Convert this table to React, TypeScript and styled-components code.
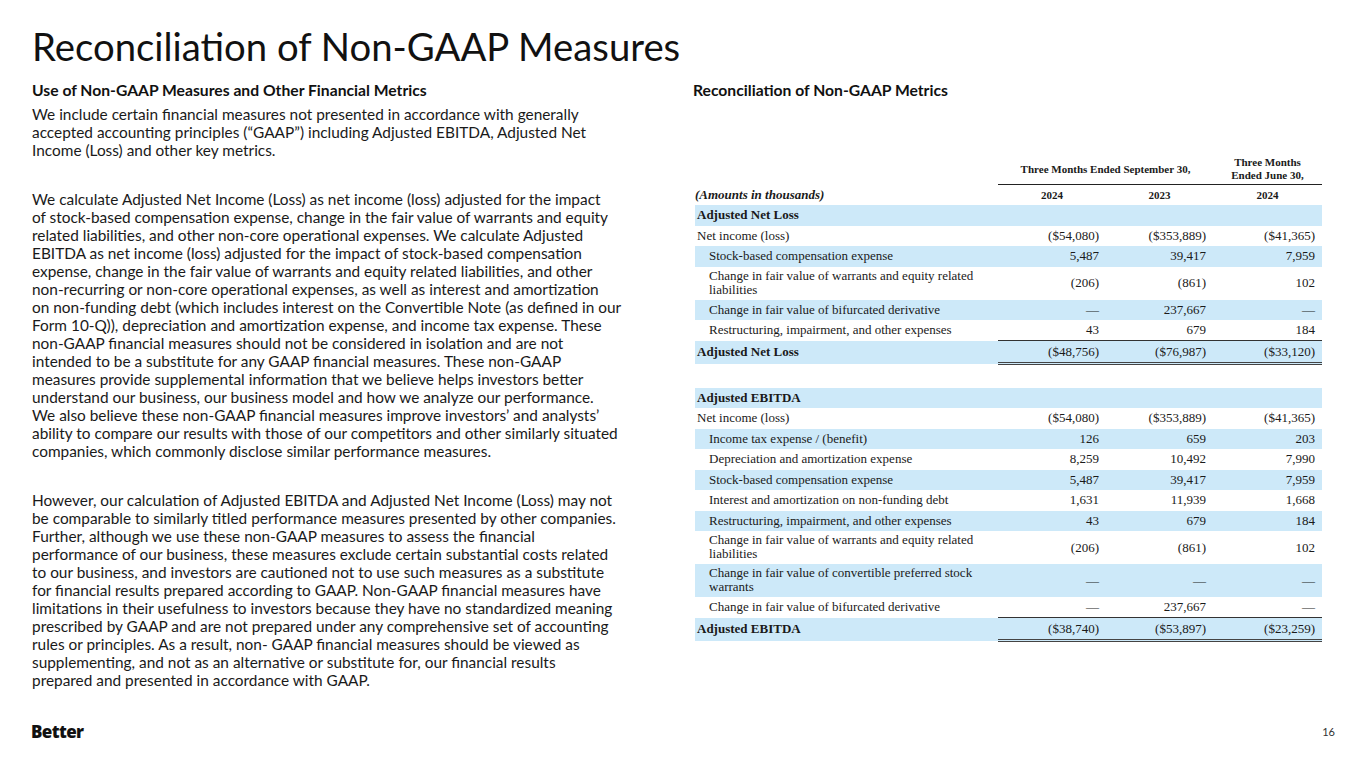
import * as React from "react";
import styled, { createGlobalStyle } from "styled-components";

const GlobalStyle = createGlobalStyle`
  html, body {
    margin: 0;
    padding: 0;
    background: #ffffff;
  }
  body {
    font-family: "Lato", "Open Sans", sans-serif;
    color: #1a1a1a;
  }
`;

const Slide = styled.div`
  width: 1365px;
  height: 768px;
  box-sizing: border-box;
  padding: 23px 32px 0 32px;
  display: flex;
  flex-direction: column;
  position: relative;
  overflow: hidden;
`;

const Title = styled.h1`
  margin: 0;
  font-family: "Lato", sans-serif;
  font-weight: 400;
  font-size: 38.3px;
  line-height: 46px;
  color: #111;
`;

const Columns = styled.div`
  display: grid;
  grid-template-columns: 604px 627px;
  column-gap: 57px;
  margin-top: 12px;
`;

const SectionHeading = styled.h2`
  margin: 0;
  font-size: 15.7px;
  font-weight: 700;
  line-height: 18px;
  color: #111;
`;

const Para = styled.p`
  margin: 7px 0 31px 0;
  font-size: 15.4px;
  line-height: 18px;
  color: #1a1a1a;
  white-space: nowrap;
  &:first-of-type {
    margin-top: 6px;
  }
  &:last-child {
    margin-bottom: 0;
  }
`;

const Table = styled.table`
  margin-top: 57px;
  margin-left: 2px;
  width: 627px;
  border-collapse: collapse;
  table-layout: fixed;
  font-family: "Liberation Serif", "Times New Roman", serif;
  font-size: 13px;
  color: #1a1a1a;
`;

const HeadCell = styled.th<{ $rule?: boolean }>`
  font-weight: 700;
  font-size: 11px;
  line-height: 13px;
  text-align: center;
  vertical-align: middle;
  padding: 0 0 2px 0;
  border-bottom: ${(p) => (p.$rule ? "1.5px solid #222" : "none")};
`;

const YearCell = styled.th<{ $left?: boolean }>`
  font-weight: 700;
  line-height: 20px;
  height: 20px;
  padding: 0;
  text-align: ${(p) => (p.$left ? "left" : "center")};
  font-style: ${(p) => (p.$left ? "italic" : "normal")};
  font-size: ${(p) => (p.$left ? "13px" : "11px")};
`;

const Row = styled.tr<{ $shade?: boolean }>`
  background: ${(p) => (p.$shade ? "#cde9f9" : "transparent")};
`;

const Label = styled.td<{ $indent?: boolean; $bold?: boolean; $tall?: boolean; $total?: boolean }>`
  padding: ${(p) => (p.$tall ? "2px 0 3px" : "0")} ${(p) => (p.$indent ? "14px" : "2px")};
  padding-right: 20px;
  height: ${(p) => (p.$tall ? "28px" : p.$total ? "23px" : "20.5px")};
  line-height: ${(p) => (p.$tall ? "14px" : "20px")};
  font-weight: ${(p) => (p.$bold ? 700 : 400)};
  vertical-align: middle;
`;

const Value = styled.td<{ $total?: boolean }>`
  padding: 0 7px 0 0;
  text-align: right;
  line-height: 20px;
  vertical-align: middle;
  border-top: ${(p) => (p.$total ? "1px solid #333" : "none")};
  border-bottom: ${(p) => (p.$total ? "3px double #444" : "none")};
`;

const Spacer = styled.tr`
  height: 24px;
`;

const Footer = styled.div`
  position: absolute;
  left: 31px;
  right: 30px;
  bottom: 25px;
  display: flex;
  justify-content: space-between;
  align-items: center;
`;

const Logo = styled.div`
  font-family: "Open Sans", sans-serif;
  font-weight: 800;
  font-size: 17px;
  letter-spacing: -0.6px;
  color: #111;
`;

const PageNum = styled.div`
  font-size: 11px;
  color: #333;
`;

const paragraphs: string[][] = [
  [
    "We include certain financial measures not presented in accordance with generally",
    "accepted accounting principles (“GAAP”) including Adjusted EBITDA, Adjusted Net",
    "Income (Loss) and other key metrics.",
  ],
  [
    "We calculate Adjusted Net Income (Loss) as net income (loss) adjusted for the impact",
    "of stock-based compensation expense, change in the fair value of warrants and equity",
    "related liabilities, and other non-core operational expenses. We calculate Adjusted",
    "EBITDA as net income (loss) adjusted for the impact of stock-based compensation",
    "expense, change in the fair value of warrants and equity related liabilities, and other",
    "non-recurring or non-core operational expenses, as well as interest and amortization",
    "on non-funding debt (which includes interest on the Convertible Note (as defined in our",
    "Form 10-Q)), depreciation and amortization expense, and income tax expense. These",
    "non-GAAP financial measures should not be considered in isolation and are not",
    "intended to be a substitute for any GAAP financial measures. These non-GAAP",
    "measures provide supplemental information that we believe helps investors better",
    "understand our business, our business model and how we analyze our performance.",
    "We also believe these non-GAAP financial measures improve investors’ and analysts’",
    "ability to compare our results with those of our competitors and other similarly situated",
    "companies, which commonly disclose similar performance measures.",
  ],
  [
    "However, our calculation of Adjusted EBITDA and Adjusted Net Income (Loss) may not",
    "be comparable to similarly titled performance measures presented by other companies.",
    "Further, although we use these non-GAAP measures to assess the financial",
    "performance of our business, these measures exclude certain substantial costs related",
    "to our business, and investors are cautioned not to use such measures as a substitute",
    "for financial results prepared according to GAAP. Non-GAAP financial measures have",
    "limitations in their usefulness to investors because they have no standardized meaning",
    "prescribed by GAAP and are not prepared under any comprehensive set of accounting",
    "rules or principles. As a result, non- GAAP financial measures should be viewed as",
    "supplementing, and not as an alternative or substitute for, our financial results",
    "prepared and presented in accordance with GAAP.",
  ],
];

type Line = {
  label: string;
  v: [string, string, string];
  indent?: boolean;
  bold?: boolean;
  tall?: boolean;
  shade?: boolean;
  total?: boolean;
};

const netLoss: Line[] = [
  { label: "Adjusted Net Loss", v: ["", "", ""], bold: true, shade: true },
  { label: "Net income (loss)", v: ["($54,080)", "($353,889)", "($41,365)"] },
  { label: "Stock-based compensation expense", v: ["5,487", "39,417", "7,959"], indent: true, shade: true },
  { label: "Change in fair value of warrants and equity related liabilities", v: ["(206)", "(861)", "102"], indent: true, tall: true },
  { label: "Change in fair value of bifurcated derivative", v: ["—", "237,667", "—"], indent: true, shade: true },
  { label: "Restructuring, impairment, and other expenses", v: ["43", "679", "184"], indent: true },
  { label: "Adjusted Net Loss", v: ["($48,756)", "($76,987)", "($33,120)"], bold: true, shade: true, total: true },
];

const ebitda: Line[] = [
  { label: "Adjusted EBITDA", v: ["", "", ""], bold: true, shade: true },
  { label: "Net income (loss)", v: ["($54,080)", "($353,889)", "($41,365)"] },
  { label: "Income tax expense / (benefit)", v: ["126", "659", "203"], indent: true, shade: true },
  { label: "Depreciation and amortization expense", v: ["8,259", "10,492", "7,990"], indent: true },
  { label: "Stock-based compensation expense", v: ["5,487", "39,417", "7,959"], indent: true, shade: true },
  { label: "Interest and amortization on non-funding debt", v: ["1,631", "11,939", "1,668"], indent: true },
  { label: "Restructuring, impairment, and other expenses", v: ["43", "679", "184"], indent: true, shade: true },
  { label: "Change in fair value of warrants and equity related liabilities", v: ["(206)", "(861)", "102"], indent: true, tall: true },
  { label: "Change in fair value of convertible preferred stock warrants", v: ["—", "—", "—"], indent: true, tall: true, shade: true },
  { label: "Change in fair value of bifurcated derivative", v: ["—", "237,667", "—"], indent: true },
  { label: "Adjusted EBITDA", v: ["($38,740)", "($53,897)", "($23,259)"], bold: true, shade: true, total: true },
];

function Rows({ lines }: { lines: Line[] }) {
  return (
    <>
      {lines.map((l, i) => (
        <Row key={i} $shade={l.shade}>
          <Label $indent={l.indent} $bold={l.bold} $tall={l.tall} $total={l.total}>
            {l.label}
          </Label>
          {l.v.map((v, j) => (
            <Value key={j} $total={l.total}>
              {v}
            </Value>
          ))}
        </Row>
      ))}
    </>
  );
}

export default function App() {
  return (
    <>
      <GlobalStyle />
      <Slide>
        <Title>Reconciliation of Non-GAAP Measures</Title>
        <Columns>
          <div>
            <SectionHeading>Use of Non-GAAP Measures and Other Financial Metrics</SectionHeading>
            {paragraphs.map((lines, i) => (
              <Para key={i}>
                {lines.map((t, j) => (
                  <React.Fragment key={j}>
                    {t}
                    {j < lines.length - 1 && <br />}
                  </React.Fragment>
                ))}
              </Para>
            ))}
          </div>
          <div>
            <SectionHeading>Reconciliation of Non-GAAP Metrics</SectionHeading>
            <Table>
              <colgroup>
                <col style={{ width: 303 }} />
                <col style={{ width: 108 }} />
                <col style={{ width: 107 }} />
                <col style={{ width: 109 }} />
              </colgroup>
              <thead>
                <tr>
                  <HeadCell />
                  <HeadCell colSpan={2} $rule>
                    Three Months Ended September 30,
                  </HeadCell>
                  <HeadCell $rule>
                    Three Months
                    <br />
                    Ended June 30,
                  </HeadCell>
                </tr>
                <tr>
                  <YearCell $left>(Amounts in thousands)</YearCell>
                  <YearCell>2024</YearCell>
                  <YearCell>2023</YearCell>
                  <YearCell>2024</YearCell>
                </tr>
              </thead>
              <tbody>
                <Rows lines={netLoss} />
                <Spacer>
                  <td colSpan={4} />
                </Spacer>
                <Rows lines={ebitda} />
              </tbody>
            </Table>
          </div>
        </Columns>
        <Footer>
          <Logo>Better</Logo>
          <PageNum>16</PageNum>
        </Footer>
      </Slide>
    </>
  );
}
